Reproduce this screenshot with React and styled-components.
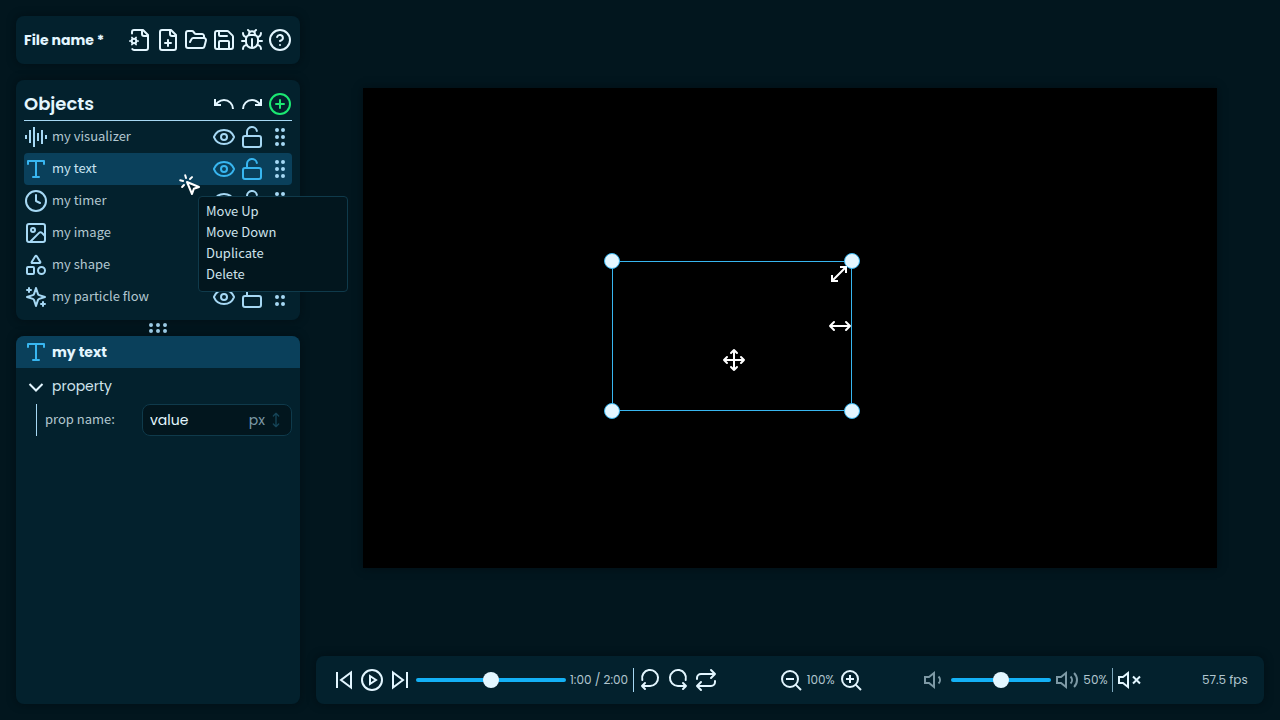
import React from "react";
import styled, { createGlobalStyle, css } from "styled-components";

const color = {
  page: "#02161e",
  panel: "#03212d",
  raised: "#0a405b",
  line: "#0f3a4b",
  bright: "#e3f6ff",
  soft: "#a6d8f4",
  text: "#b2c7d0",
  dim: "#7d99a5",
  accent: "#38b6f0",
  track: "#14b1f5",
  green: "#1be872",
};

const display = 'Poppins, Inter, "Liberation Sans", sans-serif';
const body = '"Noto Sans CJK SC", "Noto Sans", sans-serif';

const GlobalStyle = createGlobalStyle`
  *, *::before, *::after { box-sizing: border-box; }
  body {
    margin: 0;
    background: ${color.page};
    color: ${color.text};
    font-family: ${body};
    font-size: 13px;
    line-height: 20px;
  }
  h1, h2, ul { margin: 0; padding: 0; }
  ul { list-style: none; }
`;

/* ---------- icons ---------- */

const Svg = styled.svg`
  display: block;
  flex: none;
  width: ${(p) => p.$size}px;
  height: ${(p) => p.$size}px;
  fill: none;
  stroke: currentColor;
  stroke-width: 2;
  stroke-linecap: ${(p) => (p.$sharp ? "butt" : "round")};
  stroke-linejoin: ${(p) => (p.$sharp ? "miter" : "round")};
`;

const file = "M14 2v4a2 2 0 0 0 2 2h4";
const speaker = "M11 5 6 9H2v6h4l5 4Z";

const shapes = {
  fileCog: (
    <>
      <path d={file} />
      <path d="M4 5.500V4a2 2 0 0 1 2-2h9l5 5v13a2 2 0 0 1-2 2H6a2 2 0 0 1-1.700-1" />
      <circle cx="6" cy="13" r="2.300" />
      <path
        strokeWidth="1.700"
        d="M1.800 13h1.500M8.700 13h1.500M3.900 9.400l.8 1.300M8.100 9.400l-.8 1.300M3.900 16.600l.8-1.300M8.100 16.600l-.8-1.300"
      />
    </>
  ),
  filePlus: (
    <>
      <path d="M15 2H6a2 2 0 0 0-2 2v16a2 2 0 0 0 2 2h12a2 2 0 0 0 2-2V7Z" />
      <path d={file} />
      <path d="M9 15h6M12 18v-6" />
    </>
  ),
  folder: (
    <path d="m6 14 1.500-2.900A2 2 0 0 1 9.240 10H20a2 2 0 0 1 1.940 2.500l-1.540 6a2 2 0 0 1-1.950 1.500H4a2 2 0 0 1-2-2V5a2 2 0 0 1 2-2h3.900a2 2 0 0 1 1.690.9l.81 1.200a2 2 0 0 0 1.670.9H18a2 2 0 0 1 2 2v2" />
  ),
  save: (
    <>
      <path d="M15.200 3a2 2 0 0 1 1.400.6l3.800 3.800a2 2 0 0 1 .6 1.400V19a2 2 0 0 1-2 2H5a2 2 0 0 1-2-2V5a2 2 0 0 1 2-2z" />
      <path d="M17 21v-7a1 1 0 0 0-1-1H8a1 1 0 0 0-1 1v7M7 3v4a1 1 0 0 0 1 1h7" />
    </>
  ),
  bug: (
    <>
      <path d="m8 2 1.880 1.880M14.120 3.880 16 2M9 7.130v-1a3 3 0 1 1 6 0v1" />
      <path d="M12 20c-3.300 0-6-2.700-6-6v-3a4 4 0 0 1 4-4h4a4 4 0 0 1 4 4v3c0 3.300-2.700 6-6 6M12 20v-9" />
      <path d="M6.530 9C4.600 8.800 3 7.100 3 5M6 13H2M3 21c0-2.100 1.700-3.900 3.800-4M20.970 5c0 2.100-1.600 3.800-3.500 4M22 13h-4M17.200 17c2.100.1 3.800 1.900 3.800 4" />
    </>
  ),
  help: (
    <>
      <circle cx="12" cy="12" r="10" />
      <path d="M9.090 9a3 3 0 0 1 5.830 1c0 2-3 3-3 3M12 17h.010" />
    </>
  ),
  undo: <path d="M3 7v6h6M21 17a9 9 0 0 0-9-9 9 9 0 0 0-6 2.300L3 13" />,
  redo: <path d="M21 7v6h-6M3 17a9 9 0 0 1 9-9 9 9 0 0 1 6 2.300l3 2.700" />,
  add: (
    <>
      <circle cx="12" cy="12" r="10" />
      <path d="M8 12h8M12 8v8" />
    </>
  ),
  visualizer: <path d="M2 10v4M6 5v13M10 2v20M14 8v8M18 5v14M22 10v4" />,
  text: <path d="M4 7V4h16v3M9 20h6M12 4v16" />,
  timer: (
    <>
      <circle cx="12" cy="12" r="10" />
      <path d="M12 6v6l4 2" />
    </>
  ),
  image: (
    <>
      <rect x="3" y="3" width="18" height="18" rx="2" />
      <circle cx="9" cy="9" r="2" />
      <path d="m21 15-3.086-3.086a2 2 0 0 0-2.828 0L6 21" />
    </>
  ),
  shape: (
    <>
      <path d="M8.300 10a.7.7 0 0 1-.626-1.079L11.400 3a.7.7 0 0 1 1.198-.043L16.300 8.900a.7.7 0 0 1-.572 1.100Z" />
      <rect x="3" y="14" width="7" height="7" rx="1" />
      <circle cx="17.500" cy="17.500" r="3.500" />
    </>
  ),
  particles: (
    <path d="m12 3-1.912 5.813a2 2 0 0 1-1.275 1.275L3 12l5.813 1.912a2 2 0 0 1 1.275 1.275L12 21l1.912-5.813a2 2 0 0 1 1.275-1.275L21 12l-5.813-1.912a2 2 0 0 1-1.275-1.275ZM5 3v4M19 17v4M3 5h4M17 19h4" />
  ),
  eye: (
    <>
      <path d="M2.062 12.348a1 1 0 0 1 0-.696 10.750 10.750 0 0 1 19.876 0 1 1 0 0 1 0 .696 10.750 10.750 0 0 1-19.876 0" />
      <circle cx="12" cy="12" r="3" />
    </>
  ),
  unlocked: (
    <>
      <rect x="3" y="11" width="18" height="11" rx="2" />
      <path d="M7 11V7a5 5 0 0 1 9.900-1" />
    </>
  ),
  gripV: (
    <>
      {[9, 15].map((x) => [5, 12, 19].map((y) => <circle key={x + "-" + y} cx={x} cy={y} r="1" />))}
    </>
  ),
  gripH: (
    <>
      {[5, 12, 19].map((x) => [9, 15].map((y) => <circle key={x + "-" + y} cx={x} cy={y} r="1" />))}
    </>
  ),
  chevron: <path d="m5.500 10 6.500 6.500 6.500-6.500" />,
  upDown: <path d="M12 2v20M8 18l4 4 4-4M8 6l4-4 4 4" />,
  leftRight: <path d="m18 8 4 4-4 4M2 12h20M6 8l-4 4 4 4" />,
  diagonal: <path d="M11 19H5v-6M13 5h6v6M19 5 5 19" />,
  move: <path d="M12 2v20M15 19l-3 3-3-3M19 9l3 3-3 3M2 12h20M5 9l-3 3 3 3M9 5l3-3 3 3" />,
  pointer: (
    <path d="m9 9 5 12 1.800-5.200L21 14ZM7.200 2.200 8 5.100M5.100 8l-2.900-.8M14 4.100 12 6M6 12l-1.900 2" />
  ),
  previous: <path d="M19 19.500 9 12l10-7.500ZM5 20V4" />,
  next: <path d="m5 4.500 10 7.500-10 7.500ZM19 4v16" />,
  play: (
    <>
      <circle cx="12" cy="12" r="10" />
      <path d="m10 8 6 4-6 4Z" />
    </>
  ),
  loopBack: <path d="M4.300 12A8 8 0 1 1 12 18H4M7 15l-3 3 3 3" />,
  loopForward: <path d="M19.700 12A8 8 0 1 0 12 18h8M17 15l3 3-3 3" />,
  repeat: <path d="m17 2 4 4-4 4M3 11v-1a4 4 0 0 1 4-4h14M7 22l-4-4 4-4M21 13v1a4 4 0 0 1-4 4H3" />,
  zoomOut: (
    <>
      <circle cx="11" cy="11" r="8" />
      <path d="m22 22-5.350-5.350M7 11h8" />
    </>
  ),
  zoomIn: (
    <>
      <circle cx="11" cy="11" r="8" />
      <path d="m22 22-5.350-5.350M11 7v8M7 11h8" />
    </>
  ),
  quiet: <path d={speaker + "M15.540 8.460a5 5 0 0 1 0 7.070"} />,
  loud: <path d={speaker + "M15.540 8.460a5 5 0 0 1 0 7.070M19.070 4.930a10 10 0 0 1 0 14.140"} />,
  mute: <path d={speaker + "M23 8.500l-7 7M16 8.500l7 7"} />,
};

const Icon = ({ name, size = 24, sharp }) => (
  <Svg viewBox="0 0 24 24" $size={size} $sharp={sharp} aria-hidden="true">
    {shapes[name]}
  </Svg>
);

/* ---------- shared parts ---------- */

const Panel = styled.section`
  position: relative;
  background: ${color.panel};
  border-radius: 8px;
  box-shadow: 0 0 8px rgba(0, 8, 12, 0.5);
`;

const IconButton = styled.button`
  display: block;
  flex: none;
  padding: 0;
  border: 0;
  background: none;
  color: ${(p) => p.$tone || color.bright};
  cursor: pointer;
`;

const Tools = styled.div`
  display: flex;
  align-items: center;
  gap: 4px;
`;

const Action = ({ name, label, tone, sharp }) => (
  <IconButton type="button" aria-label={label} $tone={tone}>
    <Icon name={name} sharp={sharp} />
  </IconButton>
);

/* ---------- page frame ---------- */

const Layout = styled.div`
  display: grid;
  grid-template-columns: 284px minmax(0, 1fr);
  gap: 16px;
  min-height: 100vh;
  padding: 16px;
`;

const Sidebar = styled.aside`
  display: flex;
  flex-direction: column;
`;

const Main = styled.main`
  display: flex;
  flex-direction: column;
  gap: 16px;
`;

/* ---------- file panel ---------- */

const FilePanel = styled(Panel)`
  display: flex;
  align-items: center;
  justify-content: space-between;
  height: 48px;
  margin-bottom: 16px;
  padding: 0 8px;
`;

const FileName = styled.h1`
  font: 700 14px/24px ${display};
  color: ${color.bright};
`;

/* ---------- objects panel ---------- */

const ObjectsPanel = styled(Panel)`
  z-index: 1;
  padding: 8px 8px 7px;
`;

const ObjectsHeader = styled.header`
  display: flex;
  align-items: center;
  justify-content: space-between;
  height: 33px;
  border-bottom: 1px solid ${color.soft};
`;

const Title = styled.h2`
  font: 600 18px/32px ${display};
  color: ${color.bright};
`;

const ObjectRow = styled.li`
  display: flex;
  align-items: center;
  gap: 4px;
  height: 32px;
  border-radius: 4px;
  color: ${color.soft};
  ${(p) =>
    p.$selected &&
    css`
      background: ${color.raised};
      color: ${color.accent};
    `}
`;

const ObjectName = styled.span`
  flex: 1;
  padding-bottom: 2px;
  color: ${(p) => (p.$selected ? "#c8e4f1" : color.text)};
`;

const Menu = styled.ul`
  position: absolute;
  left: 182px;
  top: 116px;
  width: 150px;
  padding: 3px 7px 7px;
  background: ${color.page};
  border: 1px solid ${color.line};
  border-radius: 4px;
`;

const MenuItem = styled.button`
  display: block;
  width: 100%;
  padding: 0;
  border: 0;
  background: none;
  color: #cfe3ec;
  font: 13px/21px ${body};
  text-align: left;
`;

const Pointer = styled.div`
  position: absolute;
  left: 162px;
  top: 93px;
  color: #fff;
`;

const Handle = styled.div`
  display: flex;
  align-items: center;
  justify-content: center;
  height: 16px;
  color: ${color.soft};
`;

/* ---------- property panel ---------- */

const PropertyPanel = styled(Panel)`
  flex: 1;
  overflow: hidden;
`;

const PropertyHeader = styled.header`
  display: flex;
  align-items: center;
  gap: 4px;
  height: 32px;
  padding: 0 8px;
  background: ${color.raised};
  color: ${color.accent};
`;

const PropertyTitle = styled.h2`
  font: 700 14px/24px ${display};
  color: ${color.bright};
`;

const GroupToggle = styled.button`
  display: flex;
  align-items: center;
  gap: 4px;
  width: 100%;
  height: 36px;
  padding: 0 8px;
  border: 0;
  background: none;
  color: ${color.bright};
  font: 14px/24px ${display};
`;

const GroupLabel = styled.span`
  color: #cfe3ec;
`;

const Property = styled.div`
  display: flex;
  align-items: center;
  justify-content: space-between;
  height: 32px;
  margin: 0 8px 0 20px;
  padding-left: 8px;
  border-left: 1px solid ${color.soft};
`;

const PropertyLabel = styled.label`
  padding-bottom: 2px;
`;

const Field = styled.span`
  display: flex;
  align-items: center;
  width: 150px;
  height: 32px;
  padding: 0 7px;
  background: ${color.page};
  border: 1px solid ${color.line};
  border-radius: 8px;
  color: #164558;
`;

const FieldInput = styled.input`
  flex: 1;
  min-width: 0;
  padding: 0;
  border: 0;
  outline: 0;
  background: none;
  color: ${color.bright};
  font: 14px/24px ${display};
`;

const Unit = styled.span`
  margin-right: 3px;
  color: ${color.dim};
  font: 14px/24px ${display};
`;

/* ---------- stage ---------- */

const Stage = styled.div`
  display: flex;
  flex: 1;
  align-items: center;
  justify-content: center;
`;

const Canvas = styled.div`
  position: relative;
  width: 90%;
  aspect-ratio: 16 / 9;
  background: #000;
  box-shadow: 0 0 8px rgba(0, 8, 12, 0.5);
`;

const Selection = styled.div`
  position: absolute;
  left: 249px;
  top: 173px;
  width: 240px;
  height: 150px;
  border: 1px solid ${color.accent};
`;

const Knob = styled.span`
  position: absolute;
  ${(p) => p.$y}: -9px;
  ${(p) => p.$x}: -9px;
  width: 16px;
  height: 16px;
  border: 1px solid ${color.accent};
  border-radius: 50%;
  background: ${color.bright};
`;

const Cursor = styled.span`
  position: absolute;
  left: ${(p) => p.$x}px;
  top: ${(p) => p.$y}px;
  color: #fff;
`;

/* ---------- player ---------- */

const Player = styled(Panel)`
  display: flex;
  align-items: center;
  justify-content: space-between;
  height: 48px;
  padding: 0 16px;
`;

const Readout = styled.span`
  min-width: ${(p) => p.$width}px;
  color: ${color.text};
  font: 12px/24px ${display};
  white-space: nowrap;
`;

const Divider = styled.span`
  width: 1px;
  height: 24px;
  background: ${(p) => p.$tone || color.soft};
`;

const Range = styled.input`
  appearance: none;
  width: ${(p) => p.$width}px;
  height: 16px;
  margin: 0;
  background: none;
  &::-webkit-slider-runnable-track {
    height: 4px;
    border-radius: 2px;
    background: ${color.track};
  }
  &::-webkit-slider-thumb {
    appearance: none;
    width: 16px;
    height: 16px;
    margin-top: -6px;
    border-radius: 50%;
    background: ${color.bright};
  }
`;

const Dim = styled.span`
  color: ${color.dim};
`;

const objects = [
  ["visualizer", "my visualizer"],
  ["text", "my text"],
  ["timer", "my timer"],
  ["image", "my image"],
  ["shape", "my shape"],
  ["particles", "my particle flow"],
];

export default function App() {
  return (
    <>
      <GlobalStyle />
      <Layout>
        <Sidebar>
          <FilePanel>
            <FileName>File name *</FileName>
            <Tools>
              <Action name="fileCog" label="File settings" />
              <Action name="filePlus" label="New file" />
              <Action name="folder" label="Open file" />
              <Action name="save" label="Save file" />
              <Action name="bug" label="Report a bug" />
              <Action name="help" label="Help" />
            </Tools>
          </FilePanel>

          <ObjectsPanel>
            <ObjectsHeader>
              <Title>Objects</Title>
              <Tools>
                <Action name="undo" label="Undo" sharp />
                <Action name="redo" label="Redo" sharp />
                <Action name="add" label="Add object" tone={color.green} />
              </Tools>
            </ObjectsHeader>
            <ul>
              {objects.map(([icon, name]) => {
                const selected = icon === "text";
                return (
                  <ObjectRow key={name} $selected={selected}>
                    <Icon name={icon} sharp={icon === "visualizer"} />
                    <ObjectName $selected={selected}>{name}</ObjectName>
                    <Action name="eye" label={"Hide " + name} tone="inherit" />
                    <Action name="unlocked" label={"Lock " + name} tone="inherit" />
                    <Action name="gripV" label={"Reorder " + name} tone={color.soft} />
                  </ObjectRow>
                );
              })}
            </ul>
            <Pointer>
              <Icon name="pointer" />
            </Pointer>
            <Menu>
              {["Move Up", "Move Down", "Duplicate", "Delete"].map((item) => (
                <li key={item}>
                  <MenuItem type="button">{item}</MenuItem>
                </li>
              ))}
            </Menu>
          </ObjectsPanel>

          <Handle>
            <Icon name="gripH" />
          </Handle>

          <PropertyPanel>
            <PropertyHeader>
              <Icon name="text" />
              <PropertyTitle>my text</PropertyTitle>
            </PropertyHeader>
            <GroupToggle type="button" aria-expanded="true">
              <Icon name="chevron" sharp />
              <GroupLabel>property</GroupLabel>
            </GroupToggle>
            <Property>
              <PropertyLabel htmlFor="prop">prop name:</PropertyLabel>
              <Field>
                <FieldInput id="prop" defaultValue="value" />
                <Unit>px</Unit>
                <Icon name="upDown" size={16} />
              </Field>
            </Property>
          </PropertyPanel>
        </Sidebar>

        <Main>
          <Stage>
            <Canvas>
              <Selection>
                <Knob $x="left" $y="top" />
                <Knob $x="right" $y="top" />
                <Knob $x="left" $y="bottom" />
                <Knob $x="right" $y="bottom" />
              </Selection>
              <Cursor $x={464} $y={174}>
                <Icon name="diagonal" sharp />
              </Cursor>
              <Cursor $x={465} $y={226}>
                <Icon name="leftRight" />
              </Cursor>
              <Cursor $x={359} $y={260}>
                <Icon name="move" />
              </Cursor>
            </Canvas>
          </Stage>

          <Player>
            <Tools>
              <Action name="previous" label="Go to start" sharp />
              <Action name="play" label="Play" sharp />
              <Action name="next" label="Go to end" sharp />
              <Range type="range" aria-label="Position" defaultValue="50" $width={150} />
              <Readout $width={59}>1:00 / 2:00</Readout>
              <Divider />
              <Action name="loopBack" label="Rewind" />
              <Action name="loopForward" label="Forward" />
              <Action name="repeat" label="Repeat" />
            </Tools>
            <Tools>
              <Action name="zoomOut" label="Zoom out" sharp />
              <Readout $width={28}>100%</Readout>
              <Action name="zoomIn" label="Zoom in" sharp />
            </Tools>
            <Tools>
              <Dim>
                <Icon name="quiet" sharp />
              </Dim>
              <Range type="range" aria-label="Volume" defaultValue="50" $width={100} />
              <Dim>
                <Icon name="loud" sharp />
              </Dim>
              <Readout $width={25}>50%</Readout>
              <Divider $tone="#7da8bd" />
              <Action name="mute" label="Mute" sharp />
            </Tools>
            <Readout $width={46}>57.5 fps</Readout>
          </Player>
        </Main>
      </Layout>
    </>
  );
}
